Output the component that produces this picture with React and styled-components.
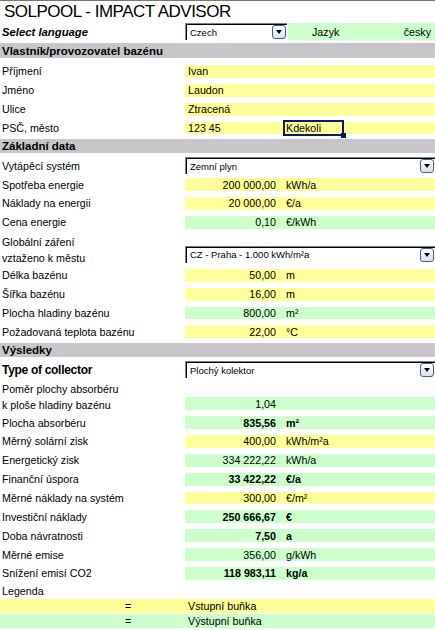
import styled, { createGlobalStyle } from 'styled-components';

const ROW = 18.86;

const tones = {
  yellow: '#ffff99',
  green: '#ccffcc',
};

const GlobalStyle = createGlobalStyle`
  html, body {
    margin: 0;
    padding: 0;
    background: #fff;
  }
  body {
    font-family: 'Liberation Sans', Arial, sans-serif;
    font-size: 10.7px;
    color: #000;
  }
`;

const Sheet = styled.div`
  width: 435px;
  height: 630px;
  overflow: hidden;
  border-top: 1px solid #7b766c;
`;

const Title = styled.h1`
  margin: 0;
  height: 21px;
  padding-left: 4px;
  font-size: 17px;
  font-weight: normal;
  line-height: 21px;
  letter-spacing: -0.5px;
  white-space: nowrap;
`;

const Row = styled.div`
  display: flex;
  align-items: ${p => (p.$bottom ? 'flex-end' : 'center')};
  height: ${p => p.$h || ROW}px;
`;

const Label = styled.div`
  width: 185px;
  flex: none;
  align-self: center;
  padding: ${p => p.$pt || 0}px 0 0 2px;
  box-sizing: border-box;
  line-height: 16px;
  white-space: nowrap;
`;

const LangLabel = styled(Label)`
  font-weight: bold;
  font-style: italic;
  font-size: 11.3px;
`;

const CollectorLabel = styled(Label)`
  font-weight: bold;
  font-size: 12px;
  letter-spacing: -0.3px;
`;

const Section = styled.div`
  height: ${p => p.$h || ROW}px;
  padding: 2px 0 ${p => p.$pb || 3}px;
  box-sizing: border-box;
`;

const SectionBand = styled.div`
  height: 100%;
  background: #c8c6cb;
  padding-left: 2px;
  font-weight: bold;
  font-size: 11.5px;
  display: flex;
  align-items: center;
  white-space: nowrap;
`;

const Cell = styled.div`
  flex: 1;
  height: ${ROW - 6}px;
  margin: 3px 0;
  display: flex;
  align-items: center;
  background: ${p => tones[p.$tone]};
  font-weight: ${p => (p.$bold ? 'bold' : 'normal')};
  white-space: nowrap;
`;

const TextValue = styled.span`
  flex: none;
  width: ${p => (p.$w ? `${p.$w}px` : 'auto')};
  padding-left: 3px;
  box-sizing: border-box;
`;

const Num = styled.span`
  flex: none;
  width: 97px;
  padding-right: 6px;
  box-sizing: border-box;
  text-align: right;
`;

const Unit = styled.span`
  padding-left: 4px;
`;

const ActiveCell = styled.span`
  position: relative;
  flex: none;
  width: 61px;
  height: 16px;
  margin: -2px 0 -1px;
  padding-left: 1px;
  box-sizing: border-box;
  border: 2px solid #0c166a;
  display: flex;
  align-items: center;
`;

const FillHandle = styled.span`
  position: absolute;
  right: -4px;
  bottom: -4px;
  width: 5px;
  height: 5px;
  background: #0c166a;
`;

const SelectBox = styled.div`
  flex: ${p => (p.$w ? 'none' : 1)};
  width: ${p => (p.$w ? `${p.$w}px` : 'auto')};
  height: 17px;
  margin-bottom: ${p => p.$mb || 0}px;
  box-sizing: border-box;
  display: flex;
  align-items: center;
  justify-content: space-between;
  padding: 0 1px 0 4px;
  background: #fff;
  border-top: 1px solid #808080;
  border-left: 1px solid #808080;
  box-shadow: inset 1px 1px 0 #000;
  font-size: 9.5px;
  white-space: nowrap;
`;

const DropButton = styled.span`
  flex: none;
  width: 14px;
  height: 14px;
  box-sizing: border-box;
  border: 1px solid #3d5f8f;
  border-radius: 3px;
  background: linear-gradient(#ffffff, #d6e0ef);
  display: flex;
  align-items: center;
  justify-content: center;

  &::after {
    content: '';
    border-left: 3.5px solid transparent;
    border-right: 3.5px solid transparent;
    border-top: 4px solid #000;
  }
`;

const LangCell = styled.div`
  flex: 1;
  height: 17px;
  margin-left: 1px;
  padding: 0 4px 0 24px;
  display: flex;
  align-items: center;
  justify-content: space-between;
  background: ${tones.green};
`;

const LegendTitle = styled.div`
  height: 16.2px;
  padding-left: 2px;
  display: flex;
  align-items: center;
`;

const LegendRow = styled.div`
  display: grid;
  grid-template-columns: 125px 63px 1fr;
  align-items: center;
  height: 14px;
  margin-bottom: 1px;
  background: ${p => tones[p.$tone]};
`;

const Dropdown = ({ value, width, mb }) => (
  <SelectBox $w={width} $mb={mb}>
    <span>{value}</span>
    <DropButton />
  </SelectBox>
);

const TextRow = ({ label, value }) => (
  <Row>
    <Label>{label}</Label>
    <Cell $tone="yellow">
      <TextValue>{value}</TextValue>
    </Cell>
  </Row>
);

const ValueRow = ({ label, tone, value, unit, bold, h, pt }) => (
  <Row $h={h} $bottom={!!h}>
    <Label $pt={pt}>{label}</Label>
    <Cell $tone={tone} $bold={bold}>
      <Num>{value}</Num>
      {unit && <Unit>{unit}</Unit>}
    </Cell>
  </Row>
);

const App = () => {
  return (
    <>
      <GlobalStyle />
      <Sheet>
        <Title>SOLPOOL - IMPACT ADVISOR</Title>

        <Row $h={19}>
          <LangLabel>Select language</LangLabel>
          <Dropdown value="Czech" width={102} />
          <LangCell>
            <span>Jazyk</span>
            <span>česky</span>
          </LangCell>
        </Row>

        <Section $h={21} $pb={4}>
          <SectionBand>Vlastník/provozovatel bazénu</SectionBand>
        </Section>
        <TextRow label="Příjmení" value="Ivan" />
        <TextRow label="Jméno" value="Laudon" />
        <TextRow label="Ulice" value="Ztracená" />
        <Row>
          <Label>PSČ, město</Label>
          <Cell $tone="yellow">
            <TextValue $w={98}>123 45</TextValue>
            <ActiveCell>
              Kdekoli
              <FillHandle />
            </ActiveCell>
          </Cell>
        </Row>

        <Section>
          <SectionBand>Základní data</SectionBand>
        </Section>
        <Row>
          <Label>Vytápěcí systém</Label>
          <Dropdown value="Zemní plyn" />
        </Row>
        <ValueRow label="Spotřeba energie" tone="yellow" value="200 000,00" unit="kWh/a" />
        <ValueRow label="Náklady na energii" tone="yellow" value="20 000,00" unit="€/a" />
        <ValueRow label="Cena energie" tone="green" value="0,10" unit="€/kWh" />
        <Row $h={34.14} $bottom>
          <Label $pt={2}>
            Globální záření
            <br />
            vztaženo k městu
          </Label>
          <Dropdown value="CZ - Praha - 1.000 kWh/m²a" mb={3} />
        </Row>
        <ValueRow label="Délka bazénu" tone="yellow" value="50,00" unit="m" />
        <ValueRow label="Šířka bazénu" tone="yellow" value="16,00" unit="m" />
        <ValueRow label="Plocha hladiny bazénu" tone="green" value="800,00" unit="m²" />
        <ValueRow label="Požadovaná teplota bazénu" tone="yellow" value="22,00" unit="°C" />

        <Section>
          <SectionBand>Výsledky</SectionBand>
        </Section>
        <Row>
          <CollectorLabel>Type of collector</CollectorLabel>
          <Dropdown value="Plochý kolektor" />
        </Row>
        <ValueRow
          label={
            <>
              Poměr plochy absorbéru
              <br />
              k ploše hladiny bazénu
            </>
          }
          tone="green"
          value="1,04"
          h={34.14}
          pt={2}
        />
        <ValueRow label="Plocha absorbéru" tone="green" value="835,56" unit="m²" bold />
        <ValueRow label="Měrný solární zisk" tone="yellow" value="400,00" unit="kWh/m²a" />
        <ValueRow label="Energetický zisk" tone="green" value="334 222,22" unit="kWh/a" />
        <ValueRow label="Finanční úspora" tone="green" value="33 422,22" unit="€/a" bold />
        <ValueRow label="Měrné náklady na systém" tone="yellow" value="300,00" unit="€/m²" />
        <ValueRow label="Investiční náklady" tone="green" value="250 666,67" unit="€" bold />
        <ValueRow label="Doba návratnosti" tone="green" value="7,50" unit="a" bold />
        <ValueRow label="Měrné emise" tone="green" value="356,00" unit="g/kWh" />
        <ValueRow label="Snížení emisí CO2" tone="green" value="118 983,11" unit="kg/a" bold />

        <LegendTitle>Legenda</LegendTitle>
        <LegendRow $tone="yellow">
          <span />
          <span>=</span>
          <span>Vstupní buňka</span>
        </LegendRow>
        <LegendRow $tone="green">
          <span />
          <span>=</span>
          <span>Výstupní buňka</span>
        </LegendRow>
      </Sheet>
    </>
  );
};

export default App;
